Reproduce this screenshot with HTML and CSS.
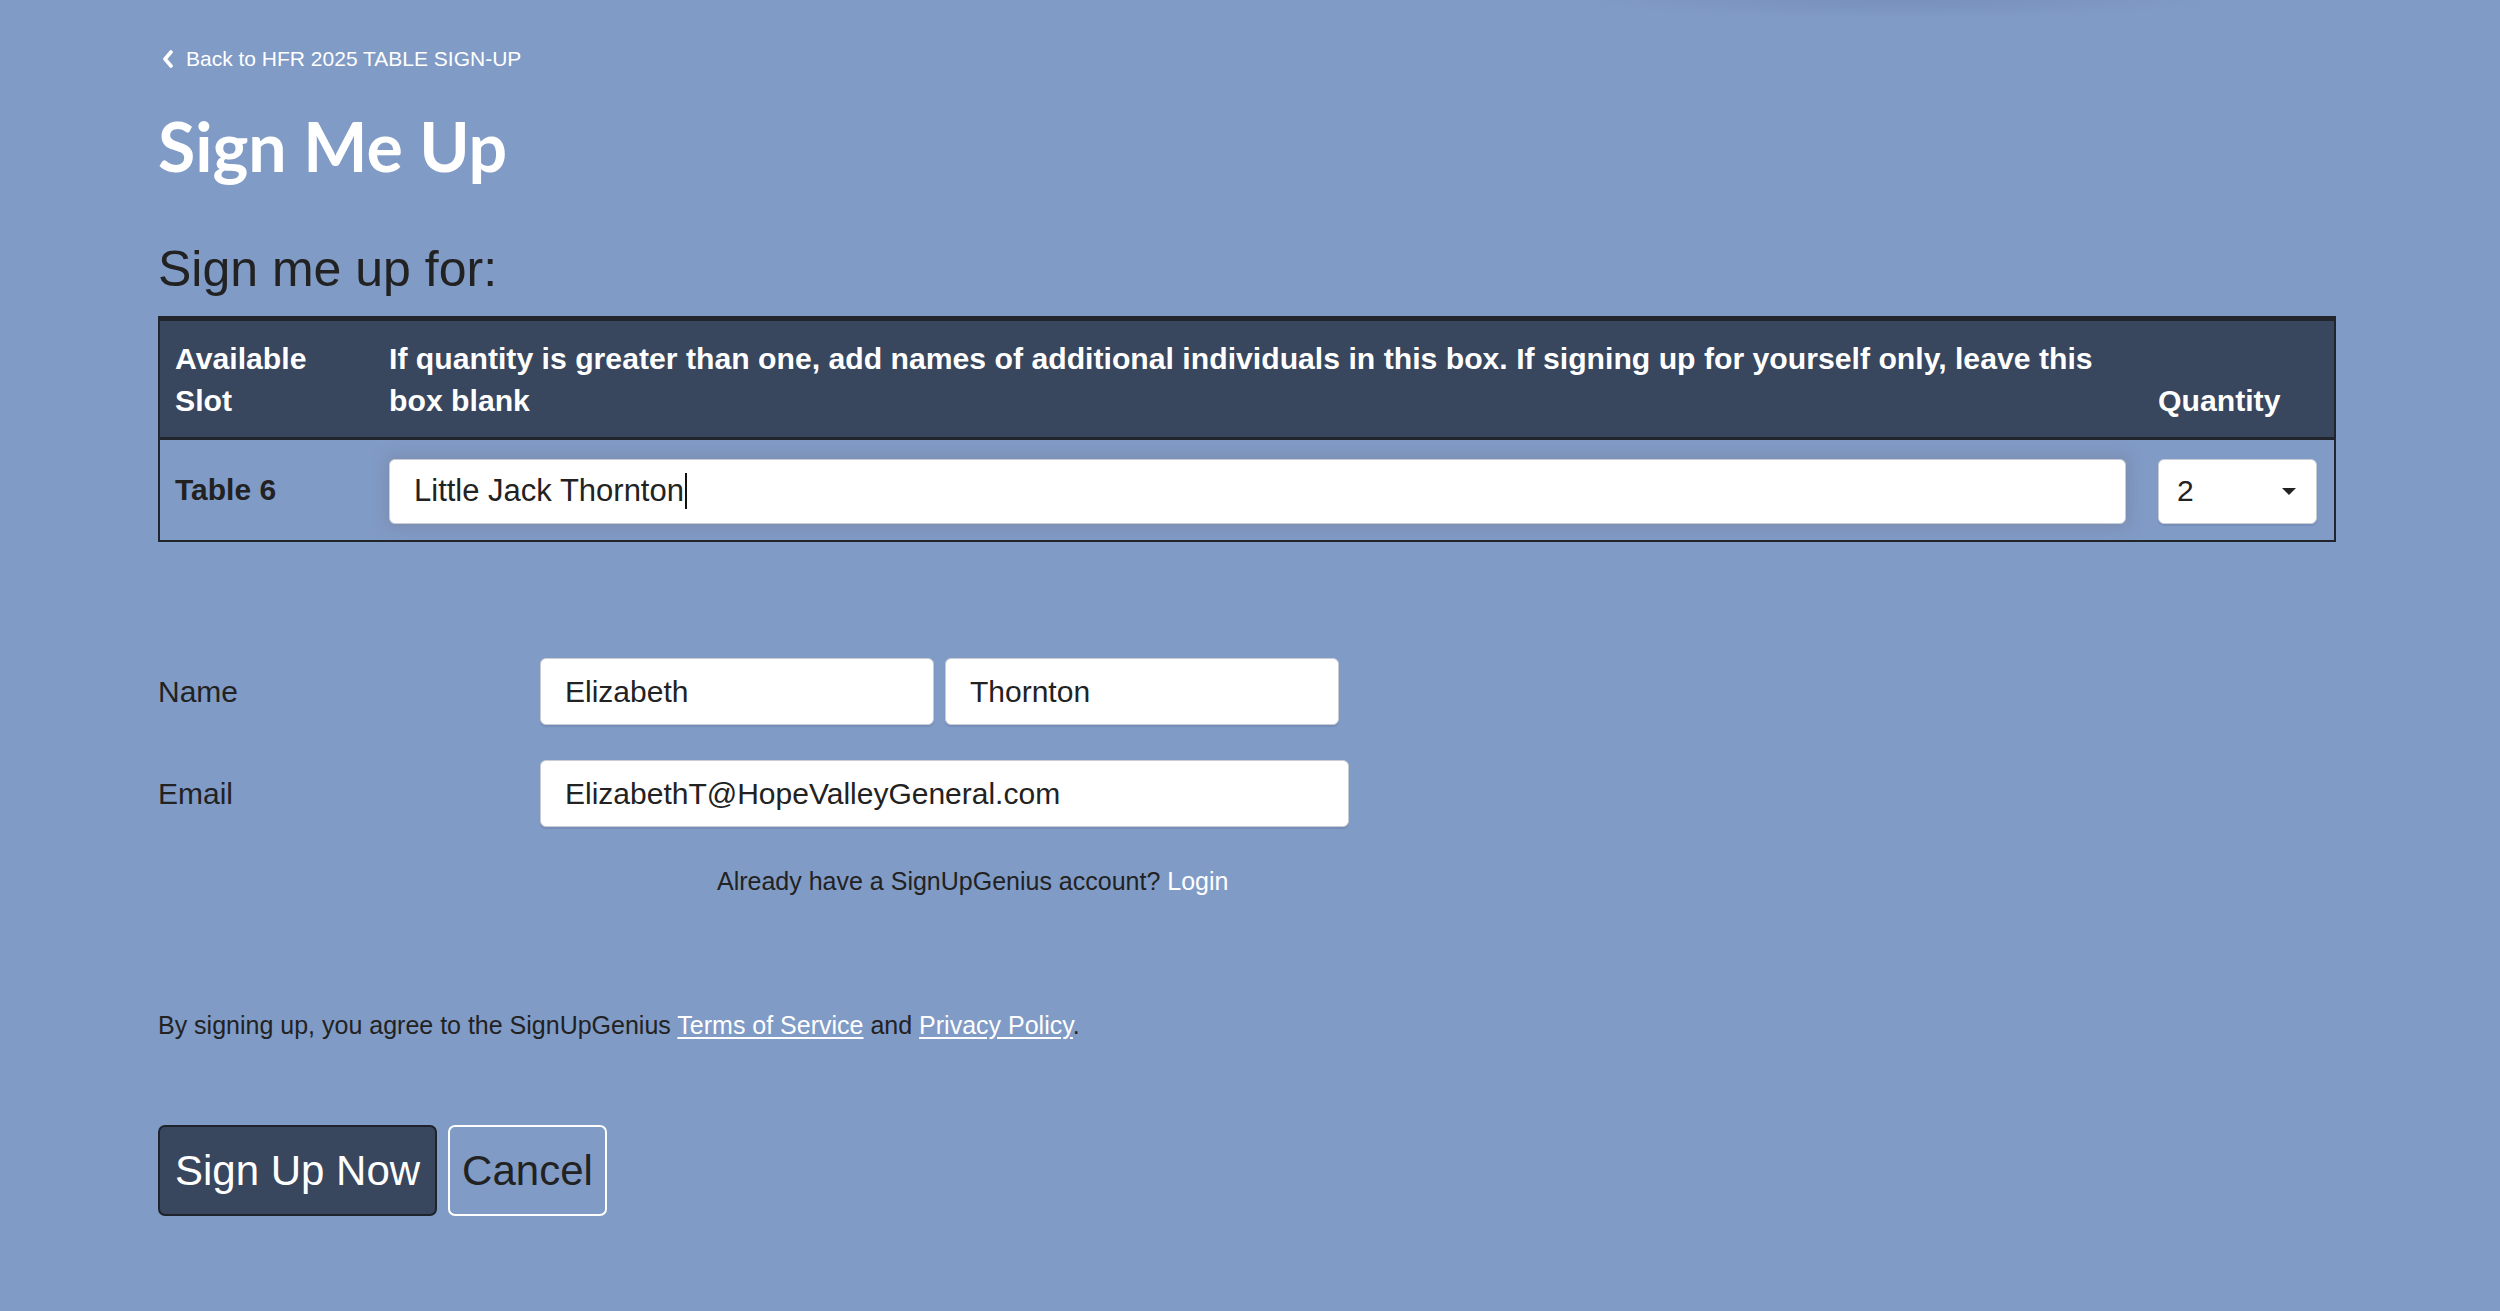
FILE: index.html
```html
<!DOCTYPE html>
<html lang="en">
<head>
    <meta charset="utf-8">
    <title>Sign Me Up</title>
    <meta name="viewport" content="width=device-width, initial-scale=1.0">
    <link rel="stylesheet" href="styles.css">
</head>
<body>
    <div class="page">
        <a class="back-link" href="#">
            <svg class="chevron" width="12" height="18" viewBox="0 0 12 18"><polyline points="9,2 3,9 9,16" fill="none" stroke="#fff" stroke-width="3.6" stroke-linecap="round" stroke-linejoin="round"/></svg>
            Back to HFR 2025 TABLE SIGN-UP
        </a>
        <h1 class="title">Sign Me Up</h1>
        <h2 class="subtitle">Sign me up for:</h2>

        <table class="slots">
            <colgroup>
                <col class="col-slot">
                <col>
                <col class="col-qty">
            </colgroup>
            <thead>
                <tr>
                    <th class="cell-slot">Available Slot</th>
                    <th class="cell-names">If quantity is greater than one, add names of additional individuals in this box. If signing up for yourself only, leave this box blank</th>
                    <th class="cell-qty">Quantity</th>
                </tr>
            </thead>
            <tbody>
                <tr>
                    <td class="cell-slot">Table 6</td>
                    <td class="cell-names">
                        <div class="field field-wide is-focused">Little Jack Thornton<span class="caret"></span></div>
                    </td>
                    <td class="cell-qty">
                        <div class="field select">
                            <span>2</span>
                            <span class="select-arrow"></span>
                        </div>
                    </td>
                </tr>
            </tbody>
        </table>

        <form class="details">
            <div class="form-row">
                <label>Name</label>
                <div class="inputs">
                    <input class="field name-input" type="text" value="Elizabeth">
                    <input class="field name-input" type="text" value="Thornton">
                </div>
            </div>
            <div class="form-row">
                <label>Email</label>
                <div class="inputs">
                    <input class="field email-input" type="text" value="ElizabethT@HopeValleyGeneral.com">
                </div>
            </div>
            <p class="login-note">Already have a SignUpGenius account? <a href="#">Login</a></p>
        </form>

        <p class="terms">By signing up, you agree to the SignUpGenius <a href="#">Terms of Service</a> and <a href="#">Privacy Policy</a>.</p>

        <div class="actions">
            <button type="button" class="btn btn-primary">Sign Up Now</button>
            <button type="button" class="btn btn-cancel">Cancel</button>
        </div>
    </div>
</body>
</html>
```

FILE: styles.css
```css
body {
    margin: 0;
    padding: 0;
    background-color: #809bc6;
    background-image: radial-gradient(ellipse 320px 18px at 1900px 0, rgba(112, 136, 180, 0.55), rgba(112, 136, 180, 0));
    font-family: 'Liberation Sans', Arial, sans-serif;
    color: #222;
    min-height: 1311px;
}
.page {
    width: 2178px;
    padding: 47px 0 60px 158px;
}
.back-link {
    display: flex;
    align-items: center;
    gap: 12px;
    height: 24px;
    font-size: 21px;
    color: #fff;
    text-decoration: none;
    margin-left: 4px;
}
.title {
    font-family: Lato, 'Liberation Sans', sans-serif;
    font-weight: 700;
    font-size: 68px;
    line-height: 84px;
    color: #fff;
    margin: 33px 0 0;
}
.subtitle {
    font-weight: 400;
    font-size: 50px;
    line-height: 58px;
    margin: 52px 0 0;
    color: #222;
}

/* slot table */
.slots {
    width: 2178px;
    margin-top: 18px;
    border-collapse: collapse;
    table-layout: fixed;
    border: 2px solid #23252c;
    border-top: 5px solid #23252c;
}
.col-slot { width: 230px; }
.col-qty { width: 187px; }
.slots th {
    background: #38465e;
    color: #fff;
    font-size: 30.2px;
    line-height: 42px;
    font-weight: 700;
    text-align: left;
    vertical-align: bottom;
    padding: 17px 0 15px;
    border-bottom: 3px solid #23252c;
}
.slots th.cell-slot {
    padding-right: 30px;
}
.slots td {
    height: 100px;
    padding: 0;
    vertical-align: middle;
    font-size: 30px;
}
.slots .cell-slot {
    padding-left: 15px;
}
.slots td.cell-slot {
    font-weight: 700;
    color: #222;
}
.slots .cell-names {
    padding-right: 22px;
}
.slots .cell-qty {
    padding-left: 10px;
    padding-right: 17px;
}

.field {
    box-sizing: border-box;
    background: #fff;
    border: 1px solid #c9ccd3;
    border-radius: 6px;
    box-shadow: 0 2px 1px rgba(40, 50, 80, 0.12);
    font-family: 'Liberation Sans', Arial, sans-serif;
    font-size: 30px;
    color: #222;
    padding: 0 24px;
    display: flex;
    align-items: center;
}
.field-wide {
    height: 65px;
    width: 100%;
    margin-top: 2px;
    font-size: 31px;
}
.is-focused {
    box-shadow: 0 0 14px 4px rgba(120, 125, 150, 0.45);
}
.caret {
    display: inline-block;
    width: 2px;
    height: 36px;
    background: #111;
    margin-left: 1px;
}
.select {
    height: 65px;
    justify-content: space-between;
    padding: 0 20px 0 18px;
    margin-top: 2px;
}
.select-arrow {
    width: 0;
    height: 0;
    border-left: 7px solid transparent;
    border-right: 7px solid transparent;
    border-top: 7px solid #222;
}

/* contact details */
.details {
    margin-top: 116px;
}
.form-row {
    display: flex;
    align-items: center;
    margin-bottom: 35px;
}
.form-row label {
    width: 382px;
    font-size: 30px;
    color: #222;
}
.inputs {
    display: flex;
    gap: 11px;
}
input.field {
    height: 67px;
    outline: none;
}
.name-input { width: 394px; }
.email-input { width: 809px; }
.login-note {
    margin: 39px 0 0 559px;
    font-size: 25px;
    line-height: 30px;
    color: #222;
}
.login-note a {
    color: #fff;
    text-decoration: none;
}
.terms {
    margin: 114px 0 0;
    font-size: 25px;
    line-height: 30px;
    color: #222;
}
.terms a {
    color: #fff;
    text-decoration: underline;
    text-underline-offset: 3px;
}

.actions {
    display: flex;
    gap: 11px;
    margin-top: 85px;
}
.btn {
    height: 91px;
    font-family: 'Liberation Sans', Arial, sans-serif;
    font-size: 42px;
    border-radius: 7px;
    padding: 0 15px;
    cursor: pointer;
}
.btn-primary {
    background: #38465e;
    color: #fff;
    border: 2px solid #1f232b;
}
.btn-cancel {
    background: transparent;
    color: #222;
    border: 2px solid #fff;
    padding: 0 12px;
}
```
